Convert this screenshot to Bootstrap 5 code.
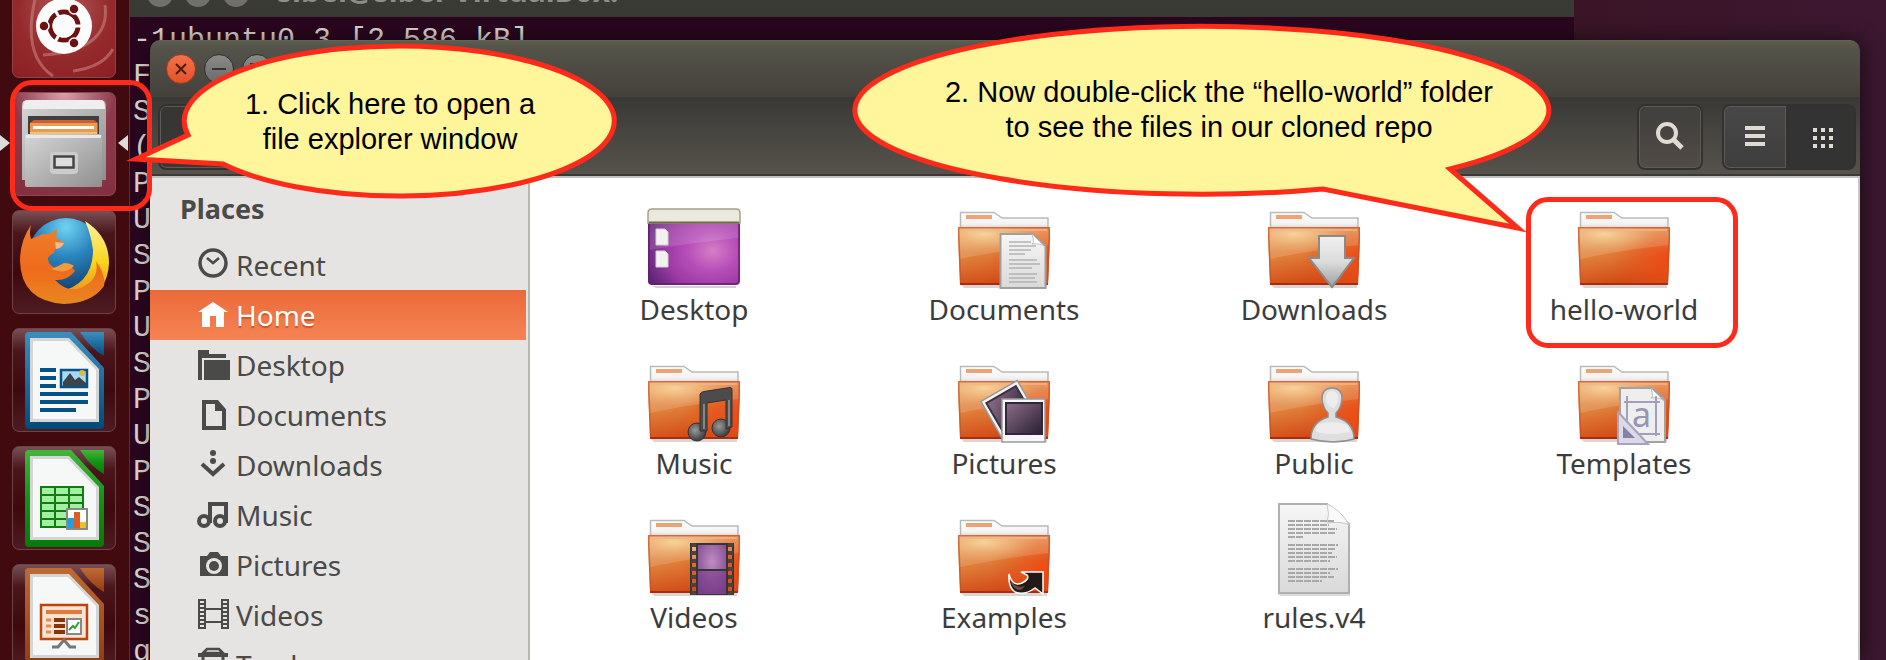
<!DOCTYPE html>
<html lang="en">
<head>
<meta charset="utf-8">
<meta name="viewport" content="width=device-width, initial-scale=1">
<title>Home</title>
<link href="https://cdn.jsdelivr.net/npm/bootstrap@5.3.0/dist/css/bootstrap.min.css" rel="stylesheet">
<script src="https://cdn.jsdelivr.net/npm/bootstrap@5.3.0/dist/js/bootstrap.bundle.min.js"></script>
<style>
  :root { --ink: #4a4a48; --mark-red: #ff2a1a; }
  body { font-family: "Noto Sans", "Open Sans", sans-serif; background: linear-gradient(90deg, #3a1424 80%, #3c1730); }
  .launcher { width: 130px; padding-left: 12px; background: #400a0f; border-right: 1px solid #5a3039; }
  .launcher ul { margin-top: -26px; gap: 14px; }
  .tile { display: block; width: 104px; height: 104px; border: 1px solid #6d4247; border-radius: 7px;
    background: linear-gradient(#775055, #4a151b 22%, #3e090e 60%, #4d1c22); }
  .tile-ubuntu { background: radial-gradient(circle at 50% 35%, #b65a58, #942a2c 55%, #8b2023); border-color: #934046; }
  .tile-files { background: radial-gradient(circle at 50% 0, #d9a0ab, #8c3a4b 45%, #832f40); border-color: #8f4555; }
  .tile svg { display: block; width: 102px; height: 102px; }
  .run-left, .run-right { top: 43px; width: 0; height: 0; border: solid transparent; border-width: 8px 0; }
  .run-left { left: -12px; border-left: 10px solid #dcdcdc; }
  .run-right { left: 106px; border-right: 10px solid #dcdcdc; }
  .desk { min-width: 0; }
  .terminal { margin-right: 312px; background: #2a071f; }
  .term-bar { height: 40px; margin-top: -23px; gap: 12px; padding-left: 17px; background: linear-gradient(#3c3b37, #383a33); }
  .term-bar span.dot { width: 26px; height: 26px; border-radius: 50%; background: #71706b; margin-top: 4px; }
  .term-title { font-size: 30px; line-height: 36px; color: #8f8d86; font-weight: 700; margin-left: 16px; margin-top: -4px; }
  .term-text { font-family: "Liberation Mono", monospace; font-size: 30px; line-height: 36px; color: #d8d4d0; margin: 5px 0 0 3px; overflow: hidden; }
  .files { top: 40px; left: 150px; right: 26px; bottom: 0; border-radius: 10px 10px 0 0; overflow: hidden; }
  .files-shadow { top: 40px; left: 150px; right: 26px; bottom: 0; border-radius: 10px 10px 0 0; box-shadow: 2px 0 20px rgba(0,0,0,.55); }
  .titlebar { height: 57px; padding: 13px 16px; gap: 8px; background: linear-gradient(#5c5d4e, #55544b 6px, #43413b); border-top: 1px solid #626550; }
  .win-btn { width: 30px; height: 30px; border-radius: 50%; padding: 0; border: 1px solid #2f2f2c; background: linear-gradient(#8a8a88, #6a6a68); color: #33322f; }
  .win-btn svg { display: block; width: 28px; height: 28px; }
  .win-close { background: linear-gradient(#f4714b, #e2512a); border-color: #a03a20; }
  .toolbar { height: 81px; padding: 7px 4px 8px 8px; background: linear-gradient(#393835, #45443f 40%, #57534c); border-bottom: 2px solid #c0c0bd; box-shadow: inset 0 -2px #3a3936; }
  .tool { width: 66px; height: 66px; padding: 0; color: #dfdbd2; border: 2px solid #33322f; border-radius: 8px; background: linear-gradient(#403f3d, #504b46); box-shadow: inset 0 0 0 1px #5d5a56; }
  .tool svg { display: block; margin: auto; width: 36px; height: 36px; }
  .tool-list { background: linear-gradient(#484848, #3e3e3e); border-radius: 8px 0 0 8px; }
  .tool-grid { background: #333; box-shadow: none; border-radius: 0 8px 8px 0; width: 68px; }
  .tool-back { width: 132px; background: linear-gradient(#363534, #3a3937); }
  .search-gap { margin-right: 19px; }
  .sidebar { width: 380px; background: #e5e4e2; border-right: 2px solid #b9b9b3; font-size: 28px; line-height: 50px; color: var(--ink); padding-right: 2px; }
  .sidebar h2 { font-size: 27px; line-height: 62px; height: 62px; margin: 0; padding-left: 30px; font-weight: 700; }
  .sidebar a { height: 50px; padding-left: 47px; gap: 7px; color: var(--ink); text-decoration: none; }
  .sidebar svg { width: 32px; height: 32px; overflow: visible; flex: none; }
  .sidebar a.current { color: #fff; background: linear-gradient(#ea6a38, #f68354); }
  .sidebar a.current span { text-shadow: 0 2px 1px #c9582c; }
  .folder-view { padding: 19px 0 0 9px; background: #fff; border-right: 2px solid #c8c8c5; overflow: hidden; min-width: 0; }
  .icon-grid { display: grid; grid-template-columns: repeat(auto-fill, 310px); row-gap: 26px; }
  .entry { color: #3c3c3c; text-decoration: none; font-size: 28px; line-height: 32px; text-align: center; }
  .entry svg { display: block; margin: 0 auto; width: 96px; height: 96px; overflow: visible; }
  .frame-red { border: 5px solid var(--mark-red); border-radius: 22px; pointer-events: none; }
  .frame-app { left: 10px; top: 80px; width: 142px; height: 131px; }
  .frame-folder { left: 1526px; top: 197px; width: 212px; height: 151px; }
  .callout-one { left: 120px; top: 40px; width: 500px; height: 164px; }
  .callout-two { left: 843px; top: 20px; width: 700px; height: 220px; }
  .callout-art { left: 0; top: 0; overflow: visible; }
  .callout-art path { fill: #fff59b; stroke: var(--mark-red); stroke-width: 5; stroke-miterlimit: 20; }
  .say { font-family: "Liberation Sans", sans-serif; font-size: 29px; line-height: 35px; color: #000; text-align: center; margin: 0; position: relative; }
  .callout-one .say { padding: 47px 0 0 40px; }
  .callout-two .say { padding: 55px 0 0 52px; }
</style>
</head>
<body class="vh-100 overflow-hidden position-relative d-flex">

<svg width="0" height="0" class="position-absolute" aria-hidden="true">
  <defs>
    <linearGradient id="front" x1="0" y1="0" x2=".3" y2="1"><stop offset="0" stop-color="#e6a468"/><stop offset=".5" stop-color="#e0803a"/><stop offset="1" stop-color="#d24a17"/></linearGradient>
    <radialGradient id="glow" cx=".28" cy=".2" r=".6"><stop offset="0" stop-color="#f6d49c"/><stop offset="1" stop-color="#f0b070" stop-opacity="0"/></radialGradient>
    <radialGradient id="ember" cx="1" cy=".6" r=".65"><stop offset="0" stop-color="#f04a14"/><stop offset="1" stop-color="#e8501a" stop-opacity="0"/></radialGradient>
    <linearGradient id="tab" x1="0" y1="0" x2="0" y2="1"><stop offset="0" stop-color="#fff"/><stop offset=".7" stop-color="#f2f2f2"/><stop offset="1" stop-color="#cfcfcf"/></linearGradient>
    <linearGradient id="paper" x1="0" y1="0" x2="0" y2="1"><stop offset="0" stop-color="#f6f6f6"/><stop offset="1" stop-color="#d9d9d9"/></linearGradient>
    <linearGradient id="steel" x1="0" y1="0" x2="0" y2="1"><stop offset="0" stop-color="#f0f0f0"/><stop offset=".5" stop-color="#dcdcdc"/><stop offset="1" stop-color="#9f9f9f"/></linearGradient>
    <radialGradient id="aurora" cx=".7" cy=".55" r=".75"><stop offset="0" stop-color="#d47fc4"/><stop offset=".35" stop-color="#b84fb9"/><stop offset=".7" stop-color="#9a38a2"/><stop offset="1" stop-color="#5f2877"/></radialGradient>
    <linearGradient id="photo" x1="0" y1="0" x2="1" y2="1"><stop offset="0" stop-color="#8d6d8c"/><stop offset="1" stop-color="#28202f"/></linearGradient>
    <radialGradient id="reel" cx=".5" cy=".35" r=".7"><stop offset="0" stop-color="#bf8cc0"/><stop offset="1" stop-color="#76408c"/></radialGradient>
    <radialGradient id="bead" cx=".4" cy=".4" r=".6"><stop offset="0" stop-color="#999"/><stop offset="1" stop-color="#3d3d3d"/></radialGradient>
    <radialGradient id="globe" cx=".5" cy=".12" r=".9"><stop offset="0" stop-color="#6fd3f2"/><stop offset=".45" stop-color="#2a83bd"/><stop offset="1" stop-color="#123763"/></radialGradient>
    <linearGradient id="fox" x1="0" y1="0" x2="0" y2="1"><stop offset="0" stop-color="#ef7f2a"/><stop offset=".55" stop-color="#ee6a1c"/><stop offset="1" stop-color="#e9861f"/></linearGradient>
    <linearGradient id="tail" x1="0" y1="0" x2="0" y2="1"><stop offset="0" stop-color="#fff3a0"/><stop offset=".5" stop-color="#f9d51e"/><stop offset="1" stop-color="#ee8220"/></linearGradient>
    <linearGradient id="cabinet" x1="0" y1="0" x2="1" y2="1"><stop offset="0" stop-color="#d6d6d6"/><stop offset="1" stop-color="#8f8f8f"/></linearGradient>
    <linearGradient id="blue" x1="0" y1="0" x2="0" y2="1"><stop offset="0" stop-color="#3b8fc0"/><stop offset="1" stop-color="#024a78"/></linearGradient>
    <linearGradient id="green" x1="0" y1="0" x2="0" y2="1"><stop offset="0" stop-color="#43b53b"/><stop offset=".5" stop-color="#129313"/><stop offset="1" stop-color="#067a09"/></linearGradient>
    <linearGradient id="brown" x1="0" y1="0" x2="0" y2="1"><stop offset="0" stop-color="#c06a33"/><stop offset="1" stop-color="#8f3c10"/></linearGradient>
  </defs>
  <symbol id="folder" viewBox="0 0 96 96">
    <path d="M5 88h86v3H8z" fill="#000" opacity=".16"/>
    <path d="M4.500 32V15.500h33.500l8 5.500h46V32z" fill="url(#tab)" stroke="#b9bab8" stroke-width="1.500"/>
    <rect x="10" y="18" width="26" height="4" fill="#efa273"/>
    <path d="M2 30h92v10l-2 48H4L2 40z" fill="url(#front)"/>
    <path d="M2 30h92v10l-2 48H4L2 40z" fill="url(#ember)"/>
    <path d="M3 31h90v17Q40 54 4 62z" fill="#fff" opacity=".14"/>
    <path d="M3 31h90v17Q40 54 4 62z" fill="url(#glow)"/>
    <path d="M2.800 30.800h90.400V40l-2 47.200H4.800L2.800 40z" fill="none" stroke="#c74e22" stroke-width="1.500" opacity=".65"/>
    <path d="M5 33h86" stroke="#f3b488" stroke-width="1.500"/>
    <path d="M4 87h88" stroke="#ad2b0a" stroke-width="2"/>
  </symbol>
  <symbol id="lo-page" viewBox="0 0 102 102">
    <path d="M16 3h42l33 36v57q0 4-4 4H16q-4 0-4-4V7q0-4 4-4z"/>
    <path d="M67 3h24v24q-14-8-24-24z"/>
    <path d="M17 9h39l30 31v53H17z" fill="#d4d5d5"/>
    <path d="M20 12h35l28 29v49H20z" fill="#f6f7f7"/>
  </symbol>
</svg>

<nav class="launcher flex-shrink-0 h-100" aria-label="Launcher">
  <ul class="list-unstyled d-flex flex-column mb-0">
    <li><button class="tile tile-ubuntu p-0" aria-label="Search your computer"><svg viewBox="0 0 102 102">
      <path d="M23 20Q8 80 40 101M92 30Q98 75 30 80M60 96q30-4 40-22" fill="none" stroke="#d39090" stroke-width="3" opacity=".5"/>
      <circle cx="51" cy="51" r="28" fill="#fdfcfc"/><circle cx="51" cy="51" r="14" fill="none" stroke="#6d1212" stroke-width="5"/>
      <path d="M51 51L69 51M51 51L42 67M51 51L42 35" stroke="#fdfcfc" stroke-width="3"/><circle cx="51" cy="51" r="11.500" fill="#fdfcfc"/>
      <g fill="#6d1212" stroke="#fdfcfc" stroke-width="1.500"><circle cx="31" cy="51" r="5"/><circle cx="61" cy="34" r="5"/><circle cx="61" cy="68" r="5"/></g>
    </svg></button></li>
    <li class="position-relative"><i class="run-left position-absolute"></i><button class="tile tile-files p-0" aria-label="Files"><svg viewBox="0 0 102 102">
      <path d="M9 13q0-6 5-6h74q5 0 5 6v74H9z" fill="url(#cabinet)"/><path d="M10 16q1-9 4-9h74q4 0 4 9z" fill="#eee"/>
      <path d="M15 23h71v20H15z" fill="#3f3f3d"/><path d="M17 30l4-3h60l4 3v13H17z" fill="#cf5c33"/><path d="M17 30h67v13H17z" fill="#e89b51"/><path d="M20 33h61v3H20z" fill="#fff"/>
      <path d="M17 39h67v5H17z" fill="#f2c077"/>
      <path d="M12 43q0-2 2-2h73q2 0 2 2v50q0 1-2 1H14q-2 0-2-2z" fill="url(#cabinet)"/><path d="M13 42h75v3H13z" fill="#e9e9e9"/>
      <rect x="37" y="59" width="28" height="22" rx="4" fill="#ccc"/><rect x="41.500" y="63.500" width="19" height="11" fill="#dedede" stroke="#444" stroke-width="2.500"/>
    </svg></button><i class="run-right position-absolute"></i></li>
    <li><button class="tile p-0" aria-label="Firefox"><svg viewBox="0 0 102 102">
      <circle cx="53" cy="45" r="38" fill="url(#globe)"/>
      <path d="M72 10q24 15 24 42-1 30-30 39l-20-10q34-8 34-42-2-16-8-29z" fill="url(#tail)"/>
      <path d="M18 14q-2 8 0 14l12-5h6l8-5-1 9 7 4q-1 6-8 7l-1 4q-7 3-6 7 2 8 14 10 10-5 13 1-8 10-20 9 16 17 34 3 10-8 7-22 10 14 8 25-12 17-40 18Q8 90 7 50q0-20 11-36z" fill="url(#fox)"/>
      <path d="M42 31l9 1q-2 5-8 6z" fill="#f7b98a"/><path d="M38 58q8-3 13-6 6 0 10 3-8 9-23 3z" fill="#f39b3a"/>
    </svg></button></li>
    <li><button class="tile p-0" aria-label="LibreOffice Writer"><svg viewBox="0 0 102 102">
      <g fill="url(#blue)"><use href="#lo-page"/></g>
      <path d="M27 41h16M27 49h16M27 57h16M27 65h48M27 73h48M27 81h36" stroke="#045286" stroke-width="4"/>
      <rect x="48" y="41" width="26" height="17" fill="#a9d8f5" stroke="#045286" stroke-width="2.500"/><path d="M50 57v-4l7-9 5 7 4-3 7 6v3z" fill="#3b4448"/><circle cx="69" cy="44" r="3" fill="#d8bd45"/>
    </svg></button></li>
    <li><button class="tile p-0" aria-label="LibreOffice Calc"><svg viewBox="0 0 102 102">
      <g fill="url(#green)"><use href="#lo-page"/></g>
      <path d="M28 40h42v40H28z" fill="#a5efa3" stroke="#117c14" stroke-width="2"/><path d="M28 48h42M28 56h42M28 64h42M28 72h42M42 40v40M56 40v40" stroke="#117c14" stroke-width="2"/>
      <rect x="54" y="62" width="20" height="20" fill="#fff" stroke="#888" stroke-width="2"/><path d="M55 71h6v10h-6z" fill="#1f9fe0"/><path d="M61 65h6v16h-6z" fill="#dc5b26"/><path d="M67 75h6v6h-6z" fill="#e9c12d"/>
    </svg></button></li>
    <li><button class="tile p-0" aria-label="LibreOffice Impress"><svg viewBox="0 0 102 102">
      <g fill="url(#brown)"><use href="#lo-page"/></g>
      <rect x="28" y="40" width="46" height="34" fill="#fbe3d3" stroke="#b9450f" stroke-width="2.500"/><path d="M33 47h36" stroke="#e07a3a" stroke-width="4"/>
      <path d="M33 55h5M33 61h5M33 67h5" stroke="#e58c50" stroke-width="3"/><path d="M41 55h11M41 61h11M41 67h11" stroke="#8a3208" stroke-width="4"/>
      <rect x="54" y="54" width="14" height="15" fill="#fff" stroke="#888" stroke-width="2"/><path d="M56 65l4-4 2 2 4-6" fill="none" stroke="#27a52a" stroke-width="2"/><path d="M39 82h6l6-7 6 7h6" fill="none" stroke="#777" stroke-width="3"/>
    </svg></button></li>
  </ul>
</nav>

<main class="desk flex-grow-1 h-100">
  <section class="terminal h-100 overflow-hidden" aria-label="Terminal">
    <div class="term-bar d-flex">
      <span class="dot"></span><span class="dot"></span><span class="dot"></span>
      <span class="term-title">sibei@sibei-VirtualBox: ~</span>
    </div>
<pre class="term-text">-1ubuntu0.3 [2,586 kB]
F
S
(
P
U
S
P
U
S
P
U
P
S
S
S
s
g</pre>
  </section>
</main>

<div class="files-shadow position-absolute"></div>
<section class="files position-absolute d-flex flex-column" aria-label="Home">
  <header>
    <div class="titlebar d-flex">
      <button class="win-btn win-close" aria-label="Close"><svg viewBox="0 0 28 28"><path d="M9 9l10 10M19 9L9 19" stroke="#4b1c0e" stroke-width="2"/></svg></button>
      <button class="win-btn" aria-label="Minimize"><svg viewBox="0 0 28 28"><path d="M7 14h14" stroke="#333" stroke-width="2"/></svg></button>
      <button class="win-btn" aria-label="Maximize"><svg viewBox="0 0 28 28"><path d="M8 9h12v10H8z" fill="none" stroke="#333" stroke-width="2"/></svg></button>
    </div>
    <div class="toolbar d-flex">
      <button class="tool tool-back me-auto" aria-label="Back"></button>
      <button class="tool search-gap" aria-label="Search"><svg viewBox="0 0 36 36" fill="none" stroke="#dfdbd2"><circle cx="15" cy="14" r="9" stroke-width="4"/><path d="M22 21l8 8" stroke-width="5"/></svg></button>
      <div class="d-flex">
        <button class="tool tool-list" aria-label="List view"><svg viewBox="0 0 36 36"><path d="M8 9h20M8 17h20M8 25h20" stroke="#dfdbd2" stroke-width="4"/></svg></button>
        <button class="tool tool-grid" aria-label="Icon view"><svg viewBox="0 0 36 36"><path d="M9 11h20M9 19h20M9 27h20" stroke="#dfdbd2" stroke-width="4" stroke-dasharray="4 4"/></svg></button>
      </div>
    </div>
  </header>
  <div class="d-flex flex-grow-1 overflow-hidden">
    <nav class="sidebar flex-shrink-0 overflow-hidden" aria-label="Places">
      <h2>Places</h2>
      <a href="#" class="d-flex align-items-center"><svg viewBox="0 0 32 32" fill="none" stroke="#4a4a48"><circle cx="16" cy="14" r="13" stroke-width="3.500"/><path d="M10 9l6 5 6-5" stroke-width="2.500"/></svg><span>Recent</span></a>
      <a href="#" class="d-flex align-items-center current" aria-current="page"><svg viewBox="0 0 32 32"><path d="M16 3l15 10h-4v15h-8V17h-6v11H5V13H1z" fill="#fff"/></svg><span>Home</span></a>
      <a href="#" class="d-flex align-items-center"><svg viewBox="0 0 32 32" fill="#4a4a48"><path d="M1 1h11v4h17v4H5v22H1z"/><path d="M7 11h26v20H7z"/></svg><span>Desktop</span></a>
      <a href="#" class="d-flex align-items-center"><svg viewBox="0 0 32 32"><path d="M7 3h13l7 8v18H7z" fill="none" stroke="#4a4a48" stroke-width="4"/><path d="M18 2v10h10z" fill="#4a4a48"/></svg><span>Documents</span></a>
      <a href="#" class="d-flex align-items-center"><svg viewBox="0 0 32 32"><path d="M5 15l11 10 11-10" fill="none" stroke="#4a4a48" stroke-width="4"/><circle cx="16" cy="4" r="3" fill="#4a4a48"/><circle cx="16" cy="12" r="3" fill="#4a4a48"/></svg><span>Downloads</span></a>
      <a href="#" class="d-flex align-items-center"><svg viewBox="0 0 32 32" fill="none" stroke="#4a4a48" stroke-width="4"><circle cx="7" cy="22" r="5"/><circle cx="23" cy="22" r="5"/><path d="M13 24V5h16v19"/></svg><span>Music</span></a>
      <a href="#" class="d-flex align-items-center"><svg viewBox="0 0 32 32"><path d="M3 7h7l3-4h8l3 4h7v20H3z" fill="#4a4a48"/><circle cx="17" cy="17" r="8" fill="#e5e4e2"/><circle cx="17" cy="17" r="5" fill="#4a4a48"/></svg><span>Pictures</span></a>
      <a href="#" class="d-flex align-items-center"><svg viewBox="0 0 32 32" fill="none" stroke="#4a4a48"><path d="M2 0v30M8 0v30M25 0v30M31 0v30M8 10h17M8 23h17" stroke-width="2"/><path d="M5 0v30M28 0v30" stroke-width="5" stroke-dasharray="2 2"/></svg><span>Videos</span></a>
      <a href="#" class="d-flex align-items-center"><svg viewBox="0 0 32 32" fill="none" stroke="#4a4a48"><path d="M6 4l4-4h12l4 4z" stroke-width="2.500"/><path d="M1 6h30" stroke-width="4"/><path d="M6 8v22h20V8" stroke-width="3"/></svg><span>Trash</span></a>
    </nav>
    <div class="folder-view flex-grow-1">
      <div class="icon-grid">
        <a href="#" class="entry"><svg viewBox="0 0 96 96"><path d="M6 89h84v2H10z" opacity=".18"/><rect x="2" y="12" width="92" height="76" rx="4" fill="url(#aurora)"/><path d="M3 26h90v15Q50 45 3 53z" fill="#fff" opacity=".13"/><rect x="3" y="13" width="90" height="74" rx="4" fill="none" stroke="#6a1a70" stroke-width="1.500"/><path d="M2 26V16q0-4 4-4h84q4 0 4 4v10z" fill="#ebe8dc" stroke="#a79f8f" stroke-width="1.500"/><path d="M3 25.500h90" stroke="#6f684a" stroke-width="2"/><path d="M10 32h9l3 3v13H10zM10 54h9l3 3v13H10z" fill="#f1f1f1" stroke="#d5d0d5"/></svg>Desktop</a>
        <a href="#" class="entry"><svg viewBox="0 0 96 96"><use href="#folder"/><path d="M44.500 37h32l13 12v42h-45z" fill="url(#paper)" stroke="#9f9f9f" stroke-width="2"/><path d="M76 37q3 10 0 10 9-1 13 3z" fill="#fff" stroke="#c4c4c4"/><path d="M53 45h22M53 49h27M53 53h22M53 57h16M53 63h28M53 67h31M53 71h23M53 77h28M53 81h26M53 85h28" stroke="#b3b3b3" stroke-width="1.500"/></svg>Documents</a>
        <a href="#" class="entry"><svg viewBox="0 0 96 96"><use href="#folder"/><path d="M53 39h26v22h9L66 90 43 61h10z" fill="url(#steel)" stroke="#8a8a88" stroke-width="2"/></svg>Downloads</a>
        <a href="#" class="entry"><svg viewBox="0 0 96 96"><use href="#folder"/></svg>hello-world</a>
        <a href="#" class="entry"><svg viewBox="0 0 96 96"><use href="#folder"/><circle cx="51" cy="81" r="9" fill="url(#bead)" stroke="#333"/><circle cx="75" cy="77" r="9" fill="url(#bead)" stroke="#333"/><path d="M54 80V43q1-2 4-2.500l26-4q2 0 2 2V76l-6 2V49l-19 3v28z" fill="#4c4c4c" stroke="#333"/><path d="M58 78V53M83 75V49" stroke="#858585" stroke-width="2"/></svg>Music</a>
        <a href="#" class="entry"><svg viewBox="0 0 96 96"><use href="#folder"/><g transform="rotate(-30 50 58)"><rect x="32" y="39" width="42" height="42" fill="#f3f3f3" stroke="#999" stroke-width="1.500"/><rect x="36" y="43" width="34" height="32" fill="url(#photo)" stroke="#3c3140" stroke-width="2"/></g><rect x="46" y="48" width="43" height="43" fill="#f6f6f6" stroke="#999" stroke-width="1.500"/><rect x="50" y="52" width="36" height="31" fill="url(#photo)" stroke="#30283a" stroke-width="2"/></svg>Pictures</a>
        <a href="#" class="entry"><svg viewBox="0 0 96 96"><use href="#folder"/><path d="M66 37q10 0 10 11-1 9-6 14v4q18 5 18 22-20 6-43 0 0-17 17-22v-4q-5-5-6-14 0-11 10-11z" fill="#dedede" stroke="#8f8f8f" stroke-width="1.500"/><path d="M66 40q6 0 6 8-1 6-4 9-8-1-8-9 0-8 6-8zM51 74q14-6 31 0l2 7q-18 4-34 0z" fill="#f4f4f4" opacity=".7"/></svg>Public</a>
        <a href="#" class="entry"><svg viewBox="0 0 96 96"><use href="#folder"/><path d="M44 37h32l13 12v42H44z" fill="#eee" stroke="#a2a2a2" stroke-width="2"/><path d="M75 37q3 10 0 10 9-1 13 3z" fill="#fff" stroke="#bbb"/><path d="M48 51h36M51 45v38M80 45v40M62 83h22" fill="none" stroke="#a19fbb" stroke-width="2"/><text x="56" y="76" font-family="Noto Sans" font-size="34" fill="#9795b5">a</text><path d="M42 61l30 32H42z" fill="#dbd9e6" stroke="#a5a3bf" stroke-width="2"/><path d="M47 75l12 12H47z" fill="#8582a8"/></svg>Templates</a>
        <a href="#" class="entry"><svg viewBox="0 0 96 96"><use href="#folder"/><path d="M45 39h42v50H45z" fill="none" stroke="#373534" stroke-width="2"/><rect x="51" y="39" width="30" height="50" fill="url(#reel)"/><rect x="51" y="66" width="30" height="23" fill="#7c3f8a" opacity=".6"/><path d="M51 39v50M81 39v50M51 65h30M45 39h42" stroke="#373534" stroke-width="2"/><path d="M47.500 38v52M84.500 38v52" stroke="#444" stroke-width="5" stroke-dasharray="4 4"/></svg>Videos</a>
        <a href="#" class="entry"><svg viewBox="0 0 96 96"><use href="#folder"/><path d="M53 69q3 13 13 9 8-4 5-8l-6-3h22v22l-8-6q-11 8-20 4-7-5-6-18z" fill="#231916" stroke="#fff" stroke-width="1.500"/><path d="M54 74q5 10 15 7-4 6-9 3-5-3-6-10z" fill="#6a4a40"/></svg>Examples</a>
        <a href="#" class="entry"><svg viewBox="0 0 96 96"><path d="M12 89h72v2H14z" opacity=".14"/><path d="M13-1h48l22 20v69H13z" fill="url(#paper)" stroke="#b0b0b0" stroke-width="2"/><path d="M61-1q3 10 0 19 15-2 22 2Q75 5 61-1z" fill="#fafafa" stroke="#c8c8c8"/><path d="M22 16h46M22 20h41M22 24h49M22 28h47M22 32h16M22 40h50M22 44h48M22 48h44M22 52h49M22 56h42M22 64h50M22 68h42M22 72h46M22 76h34" stroke="#a8a8a8" stroke-width="2" stroke-dasharray="7 1"/></svg>rules.v4</a>
      </div>
    </div>
  </div>
</section>

<div class="frame-red frame-app position-absolute"></div>
<div class="frame-red frame-folder position-absolute"></div>
<aside class="callout-one position-absolute">
  <svg class="callout-art position-absolute" width="500" height="164" viewBox="0 0 500 164" aria-hidden="true"><path d="M68 95A215 75 0 1 1 103 124L16 119z"/></svg>
  <p class="say">1. Click here to open a<br>file explorer window</p>
</aside>
<aside class="callout-two position-absolute">
  <svg class="callout-art position-absolute" width="700" height="220" viewBox="0 0 700 220" aria-hidden="true"><path d="M480 169A347 84 0 1 1 607 149L675 208z"/></svg>
  <p class="say">2. Now double-click the “hello-world” folder<br>to see the files in our cloned repo</p>
</aside>
</body>
</html>
